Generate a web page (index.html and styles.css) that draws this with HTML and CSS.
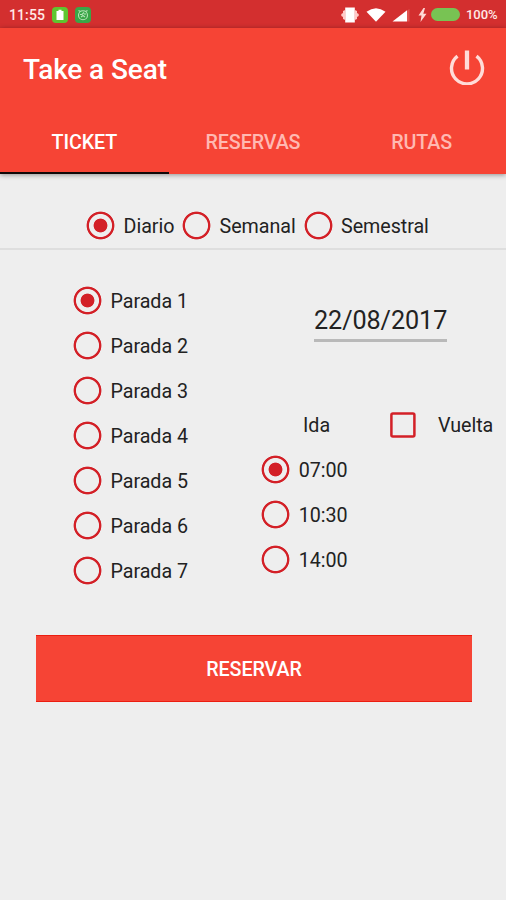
FILE: index.html
```html
<!DOCTYPE html>
<html lang="es">
<head>
<meta charset="utf-8">
<title>Take a Seat</title>
<link rel="stylesheet" href="styles.css">
</head>
<body>
<div class="status">
  <span class="clock">11:55</span>
  <svg class="app-icon" width="16" height="16" viewBox="0 0 16 16"><rect width="16" height="16" rx="4" fill="#5fc52f"/><path d="M4.500 4h2V2.800h3V4h2v9h-7z" fill="#fff"/></svg>
  <svg class="app-icon second" width="16" height="16" viewBox="0 0 16 16"><rect width="16" height="16" rx="4" fill="#39a647"/><g fill="none" stroke="#b5e3b6" stroke-width="1.1"><circle cx="8" cy="8.200" r="4.500"/><path d="M3.500 3.500l2 1M12.500 3.500l-2 1M5 7.500h2l2-2M9 7h2M6 10l2-1.500 2 1.500"/></g></svg>
  <div class="indicators">
    <svg width="18" height="16" viewBox="0 0 18 16"><path d="M4.200 .5h9.600v15H4.200z" fill="#fff"/><path d="M4.200 3v10L2 12V10L.3 9V7L2 6V4zM13.800 3v10l2.200-1v-2l1.700-1V7L16 6V4z" fill="#ffc9c7"/></svg>
    <svg class="wifi" width="20" height="14" viewBox="0 0 20 14"><path d="M.5 3.800Q10-3.300 19.500 3.800L10 13.700z" fill="#fff"/></svg>
    <svg class="signal" width="18" height="13" viewBox="0 0 18 13"><path d="M15 1.500v11h2.500V0z" fill="#e0524f"/><path d="M.5 12.500L15 1.200v11.300z" fill="#fff"/></svg>
    <svg class="bolt" width="9" height="14" viewBox="0 0 9 14"><path d="M5.500 0L.5 7.500h3L2.500 14 8.500 5.800h-3.200L7 0z" fill="#ffd9d6"/></svg>
    <span class="battery"></span>
    <span class="percent">100%</span>
  </div>
</div>
<header class="appbar">
  <div class="toolbar">
    <h1>Take a Seat</h1>
    <svg width="36" height="36" viewBox="0 0 36 36" fill="none" stroke="#ffdcd8"><path d="M8.500 7.100A15.500 15.500 0 1 0 27.500 7.100" stroke-width="3.400"/><path d="M18 1.500v19" stroke-width="4.300"/></svg>
  </div>
  <nav class="tabs"><a class="active">TICKET</a><a>RESERVAS</a><a>RUTAS</a></nav>
</header>
<main>
  <div class="periods">
    <label class="option diario"><i class="radio on"></i><span>Diario</span></label>
    <label class="option semanal"><i class="radio"></i><span>Semanal</span></label>
    <label class="option"><i class="radio"></i><span>Semestral</span></label>
  </div>
  <div class="selection">
    <div class="stops">
      <label class="option"><i class="radio on"></i><span>Parada 1</span></label>
      <label class="option"><i class="radio"></i><span>Parada 2</span></label>
      <label class="option"><i class="radio"></i><span>Parada 3</span></label>
      <label class="option"><i class="radio"></i><span>Parada 4</span></label>
      <label class="option"><i class="radio"></i><span>Parada 5</span></label>
      <label class="option"><i class="radio"></i><span>Parada 6</span></label>
      <label class="option"><i class="radio"></i><span>Parada 7</span></label>
    </div>
    <div class="schedule">
      <div class="date">22/08/2017</div>
      <div class="direction"><span class="ida">Ida</span><svg class="checkbox" width="26" height="26" viewBox="0 0 26 26"><rect x="1.400" y="1.400" width="23" height="23" rx="1.500" fill="none" stroke="#d32027" stroke-width="2.500"/></svg><span>Vuelta</span></div>
      <div class="times">
        <label class="option"><i class="radio on"></i><span>07:00</span></label>
        <label class="option"><i class="radio"></i><span>10:30</span></label>
        <label class="option"><i class="radio"></i><span>14:00</span></label>
      </div>
    </div>
  </div>
  <button class="reserve">RESERVAR</button>
</main>
</body>
</html>
```
FILE: styles.css
```css
* { box-sizing: border-box; }
body {
  margin: 0;
  height: 900px;
  overflow: hidden;
  background: #eee;
  color: #222;
  font: 19.7px/24px Roboto, sans-serif;
  letter-spacing: -.04px;
}
svg { display: block; flex: none; }
.status {
  display: flex;
  align-items: center;
  height: 28px;
  padding: 1px 8px 0 9px;
  background: #d32f2f;
  color: #ffe9e7;
  font-size: 14px;
  font-weight: 500;
  line-height: 28px;
}
.clock { width: 43px; letter-spacing: .1px; }
.second { margin-left: 7px; }
.indicators { display: flex; align-items: center; margin-left: auto; }
.wifi { margin-left: 7px; }
.signal { margin: 2px 0 0 6px; }
.bolt { margin-left: 8px; }
.battery { width: 29px; height: 13px; margin-left: 4px; border-radius: 7px; background: #78c353; }
.percent { width: 32px; margin-left: 6px; font-size: 13px; white-space: nowrap; }
.appbar { height: 146px; background: #f64435; box-shadow: 0 1px 5px rgba(0, 0, 0, .4); }
.toolbar { display: flex; justify-content: space-between; height: 81px; padding: 21px 21px 0 23px; }
h1 { margin: 5px 0 0; color: #fff; font-size: 28px; font-weight: 500; line-height: 32px; letter-spacing: -.1px; }
.tabs { display: grid; grid-template-columns: repeat(3, 1fr); height: 65px; }
.tabs a { padding-top: 22px; color: #ffb9b2; font-weight: 500; text-align: center; letter-spacing: -.1px; }
.tabs .active { border-bottom: 2px solid #100808; color: #fff; }
.periods { display: flex; height: 76px; padding: 29px 0 0 86.5px; border-bottom: 2px solid #dedede; }
.option { display: flex; align-items: center; height: 45px; gap: 9px; white-space: nowrap; }
.option span { padding-top: 2px; }
.stops .option span, .times .option span { padding-top: 3px; }
.radio {
  --dot: transparent;
  flex: none;
  width: 29px;
  height: 29px;
  margin: 0 -.5px;
  background: radial-gradient(circle, var(--dot) 6.5px, transparent 7.3px 11.1px, #d32027 11.9px 13.5px, transparent 14.3px);
}
.radio.on { --dot: #d32027; }
.diario { width: 96px; }
.semanal { width: 121.5px; }
.selection { display: grid; grid-template-columns: 188px 1fr; height: 357px; padding: 27.5px 0 0 74px; }
.stops { margin-left: -.5px; }
.times { margin: -.5px 0 0 -.2px; }
.schedule { padding-top: 28.5px; }
.date { width: 133px; height: 36px; margin-left: 52px; border-bottom: 3px solid #b9b9b9; font-size: 25.2px; line-height: 30px; letter-spacing: -.08px; white-space: nowrap; }
.direction { display: flex; align-items: center; height: 45px; margin-top: 60.5px; }
.ida { width: 128px; padding-left: 41px; }
.checkbox { margin: -1px 22px 0 0; }
.direction span { padding-top: 1px; }
.reserve {
  display: block;
  width: 436px;
  height: 67px;
  margin: 28px 0 0 36px;
  padding: 2px 0 0;
  border: solid #eb1d10;
  border-width: 1px 0;
  background: #f64435;
  color: #fff;
  font: 500 19.7px/24px Roboto, sans-serif;
  letter-spacing: -.1px;
}
```
